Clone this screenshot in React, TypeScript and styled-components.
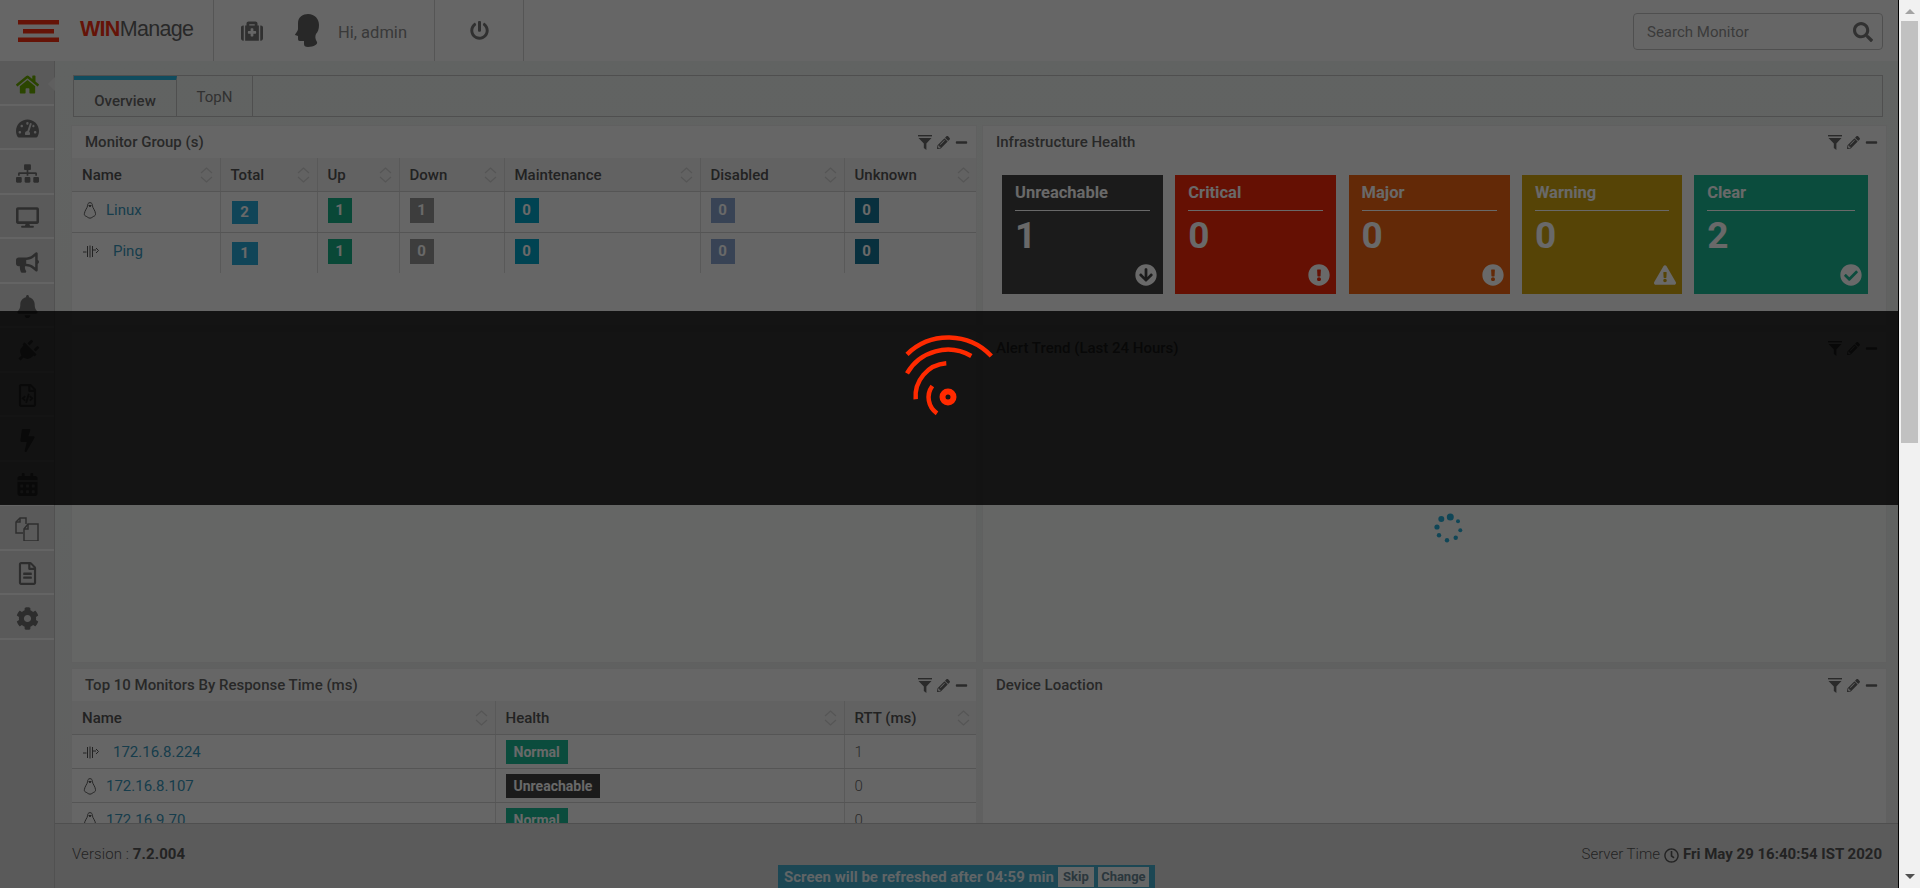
import React from "react";
import styled, { createGlobalStyle } from "styled-components";
import {
  FaHome,
  FaTachometerAlt,
  FaSitemap,
  FaDesktop,
  FaBullhorn,
  FaBell,
  FaPlug,
  FaRegFileCode,
  FaBolt,
  FaCalendarAlt,
  FaRegFileAlt,
  FaCog,
  FaMedkit,
  FaPowerOff,
  FaSearch,
  FaPencilAlt,
  FaMinus,
  FaArrowCircleDown,
  FaExclamationCircle,
  FaExclamationTriangle,
  FaCheckCircle,
  FaRegClock,
} from "react-icons/fa";

const GlobalStyle = createGlobalStyle`
  html, body {
    margin: 0;
    padding: 0;
    height: 100%;
    overflow: hidden;
    background: #f1f1f1;
    font-family: Roboto, "Liberation Sans", sans-serif;
  }
  * { box-sizing: border-box; }
`;

const CopyIcon = () => (
  <svg width="24" height="24" viewBox="0 0 24 24" fill="none" stroke="currentColor" strokeWidth="1.5">
    <path d="M8 16H1V5l4-4h6v6" />
    <path d="M1 5h4V1" />
    <path d="M9 12l4-5h10v17H9z" />
    <path d="M9 12h4V7" />
  </svg>
);

const HeadIcon = () => (
  <svg width="25" height="33" viewBox="0 0 25 33" fill="currentColor">
    <path d="M13 0c7 0 11 5 11 11 0 4-1 7-3 9-1 2-1 5 1 8 1 2-3 5-9 5-3 0-4-1-4-3v-3H5c-2 0-2-1-2-3v-2l-3-1c0-1 3-4 3-6V9C3 3 8 0 13 0z" />
  </svg>
);

const MenuIcon = () => (
  <svg width="41" height="22" viewBox="0 0 41 22" fill="currentColor">
    <rect x="0" y="0" width="41" height="4.5" />
    <rect x="5" y="9" width="31" height="4.5" />
    <rect x="0" y="17.5" width="41" height="4.5" />
  </svg>
);

const FunnelIcon = () => (
  <svg width="14" height="15" viewBox="0 0 14 15" fill="currentColor">
    <rect x="0" y="0" width="14" height="1.4" />
    <path d="M0.5 3h13L8.4 8.6V15L5.8 13V8.6z" />
  </svg>
);

const PenguinIcon = () => (
  <svg width="14" height="17" viewBox="0 0 13 16" fill="none" stroke="currentColor" strokeWidth="0.9">
    <path d="M6.500 0.600c1.700 0 2.300 1.300 2.300 3 0 1.600 2.700 4.400 2.900 7.400.1 1.300-.4 2-1.600 2.400-1 .4-2 1.800-3.600 1.800s-2.700-1.400-3.700-1.800C1.600 13 1 12.300 1.200 11 1.500 8 4.200 5.200 4.200 3.600c0-1.700.6-3 2.300-3z" />
    <path d="M5.400 3.300h2.200L6.500 4.600z" fill="currentColor" />
  </svg>
);

const PingIcon = () => (
  <svg width="16" height="13" viewBox="0 0 16 13" fill="none" stroke="currentColor" strokeWidth="1">
    <path d="M0 7h3.500M4.500 1v11M7 0.500v12M9.500 1v11M9.500 5h3.500M13 3l2.500 2.500L13 8" />
  </svg>
);

const SortIcon = () => (
  <svg width="13" height="16" viewBox="0 0 13 16" fill="none" stroke="currentColor" strokeWidth="1.1">
    <path d="M1 6l5.500-5 5.500 5M1 10l5.500 5 5.500-5" />
  </svg>
);

const WaveLogo = () => (
  <svg width="130" height="100" viewBox="-64 -70 130 100" fill="none" stroke="#ff2a00" strokeWidth="4.5">
    <path d="M-41 -42.700A59.300 59.300 0 0 1 43.300 -41" />
    <path d="M-41 -23.700A47 47 0 0 1 23.300 -41" />
    <path d="M-32.300 2.300A33 33 0 0 1 -1.700 -33.700" />
    <path d="M-15.700 -11A19.300 19.300 0 0 0 -11 16.300" />
    <circle cx="0" cy="0" r="5.500" strokeWidth="6" />
  </svg>
);

const SpinnerIcon = () => (
  <svg width="32" height="32" viewBox="0 0 32 32" fill="#259cc0">
    <circle cx="18.300" cy="5" r="3.500" />
    <circle cx="9.300" cy="7" r="3" />
    <circle cx="5" cy="15" r="2.600" />
    <circle cx="7" cy="23.300" r="2.200" />
    <circle cx="15" cy="28.300" r="2.200" />
    <circle cx="23.700" cy="25.700" r="2.200" />
    <circle cx="28.300" cy="18.300" r="2" />
    <circle cx="26" cy="9.300" r="2" />
  </svg>
);

const TiltedPlug = styled(FaPlug)`
  transform: rotate(45deg);
`;

const navItems = [
  { icon: <FaHome />, active: true },
  { icon: <FaTachometerAlt /> },
  { icon: <FaSitemap /> },
  { icon: <FaDesktop /> },
  { icon: <FaBullhorn /> },
  { icon: <FaBell /> },
  { icon: <TiltedPlug /> },
  { icon: <FaRegFileCode /> },
  { icon: <FaBolt /> },
  { icon: <FaCalendarAlt /> },
  { icon: <CopyIcon /> },
  { icon: <FaRegFileAlt /> },
  { icon: <FaCog /> },
];

const healthCards = [
  { title: "Unreachable", count: 1, color: "#3c3c3c", width: 161, icon: <FaArrowCircleDown /> },
  { title: "Critical", count: 0, color: "#e02407", width: 161, icon: <FaExclamationCircle /> },
  { title: "Major", count: 0, color: "#dc5b10", width: 161, icon: <FaExclamationCircle /> },
  { title: "Warning", count: 0, color: "#be970f", width: 160, icon: <FaExclamationTriangle /> },
  { title: "Clear", count: 2, color: "#1aa888", width: 174, icon: <FaCheckCircle /> },
];

const groupColumns = [
  { name: "Name", width: 148 },
  { name: "Total", width: 97 },
  { name: "Up", width: 82 },
  { name: "Down", width: 105 },
  { name: "Maintenance", width: 196 },
  { name: "Disabled", width: 144 },
  { name: "Unknown", width: 133 },
];

const groupRows = [
  { name: "Linux", icon: <PenguinIcon />, gap: 9, values: [2, 1, 1, 0, 0, 0] },
  { name: "Ping", icon: <PingIcon />, gap: 14, values: [1, 1, 0, 0, 0, 0] },
];

const badgeColors = ["#2599c4", "#14a07a", "#888888", "#0096b5", "#7d96bc", "#136c8a"];

const topColumns = [
  { name: "Name", width: 423 },
  { name: "Health", width: 349 },
  { name: "RTT (ms)", width: 133 },
];

const topRows = [
  { ip: "172.16.8.224", ping: true, health: "Normal", rtt: 1 },
  { ip: "172.16.8.107", ping: false, health: "Unreachable", rtt: 0 },
  { ip: "172.16.9.70", ping: false, health: "Normal", rtt: 0 },
];

const PanelHead = ({ title }: { title: string }) => (
  <PanelHeader>
    <PanelTitle>{title}</PanelTitle>
    <PanelTools>
      <FunnelIcon />
      <FaPencilAlt />
      <FaMinus />
    </PanelTools>
  </PanelHeader>
);

const TableHead = ({ columns }: { columns: { name: string; width: number }[] }) => (
  <>
    <colgroup>
      {columns.map((c) => (
        <col key={c.name} width={c.width} />
      ))}
    </colgroup>
    <thead>
      <tr>
        {columns.map((c) => (
          <HeadCell key={c.name}>
            <HeadInner>
              {c.name}
              <SortIcon />
            </HeadInner>
          </HeadCell>
        ))}
      </tr>
    </thead>
  </>
);

const App: React.FC = () => {
  return (
    <Shell>
      <GlobalStyle />
      <Page>
        <Header>
          <BrandBlock>
            <MenuButton>
              <MenuIcon />
            </MenuButton>
            <Logo>
              <LogoAccent>WIN</LogoAccent>Manage
            </Logo>
          </BrandBlock>
          <UserBlock>
            <MedkitButton>
              <FaMedkit />
            </MedkitButton>
            <UserHead>
              <HeadIcon />
            </UserHead>
            <UserName>Hi, admin</UserName>
          </UserBlock>
          <PowerBlock>
            <FaPowerOff />
          </PowerBlock>
          <SearchBox>
            <SearchText>Search Monitor</SearchText>
            <FaSearch />
          </SearchBox>
        </Header>
        <Body>
          <Sidebar>
            {navItems.map((item, i) => (
              <NavItem key={i} $active={item.active}>
                {item.icon}
              </NavItem>
            ))}
          </Sidebar>
          <Main>
            <Content>
              <Tabs>
                <Tab $active>Overview</Tab>
                <Tab>TopN</Tab>
              </Tabs>
              <PanelGrid>
                <Panel>
                  <PanelHead title="Monitor Group (s)" />
                  <DataTable>
                    <TableHead columns={groupColumns} />
                    <tbody>
                      {groupRows.map((row) => (
                        <GroupRow key={row.name}>
                          <Cell>
                            <NameWrap $gap={row.gap}>
                              <RowIcon>{row.icon}</RowIcon>
                              <RowLink>{row.name}</RowLink>
                            </NameWrap>
                          </Cell>
                          {row.values.map((v, i) => (
                            <Cell key={i}>
                              <CountBadge $color={badgeColors[i]} $wide={i === 0}>
                                {v}
                              </CountBadge>
                            </Cell>
                          ))}
                        </GroupRow>
                      ))}
                    </tbody>
                  </DataTable>
                </Panel>
                <Panel>
                  <PanelHead title="Infrastructure Health" />
                  <CardRow>
                    {healthCards.map((card) => (
                      <HealthCard key={card.title} $color={card.color} $width={card.width}>
                        <CardTitle>{card.title}</CardTitle>
                        <CardCount>{card.count}</CardCount>
                        <CardIcon>{card.icon}</CardIcon>
                      </HealthCard>
                    ))}
                  </CardRow>
                </Panel>
                <Panel $tint />
                <Panel $tint>
                  <PanelHead title="Alert Trend (Last 24 Hours)" />
                  <SpinnerWrap>
                    <SpinnerIcon />
                  </SpinnerWrap>
                </Panel>
                <Panel>
                  <PanelHead title="Top 10 Monitors By Response Time (ms)" />
                  <DataTable>
                    <TableHead columns={topColumns} />
                    <tbody>
                      {topRows.map((row) => (
                        <TopRow key={row.ip}>
                          <Cell>
                            <NameWrap $gap={row.ping ? 14 : 9}>
                              <RowIcon>{row.ping ? <PingIcon /> : <PenguinIcon />}</RowIcon>
                              <RowLink>{row.ip}</RowLink>
                            </NameWrap>
                          </Cell>
                          <Cell>
                            <HealthBadge $down={row.health === "Unreachable"}>{row.health}</HealthBadge>
                          </Cell>
                          <Cell>{row.rtt}</Cell>
                        </TopRow>
                      ))}
                    </tbody>
                  </DataTable>
                </Panel>
                <Panel>
                  <PanelHead title="Device Loaction" />
                </Panel>
              </PanelGrid>
            </Content>
            <Footer>
              <Version>
                Version : <strong>7.2.004</strong>
              </Version>
              <RefreshBar>
                Screen will be refreshed after 04:59 min
                <RefreshButton $width={36}>Skip</RefreshButton>
                <RefreshButton $width={51}>Change</RefreshButton>
              </RefreshBar>
              <ServerTime>
                Server Time <FaRegClock /> <strong>Fri May 29 16:40:54 IST 2020</strong>
              </ServerTime>
            </Footer>
          </Main>
        </Body>
        <Overlay>
          <LoaderBand>
            <WaveLogo />
          </LoaderBand>
        </Overlay>
      </Page>
      <Scrollbar>
        <ArrowUp />
        <Thumb />
        <ArrowDown />
      </Scrollbar>
    </Shell>
  );
};
export default App;

const Shell = styled.div`
  width: 1920px;
  height: 888px;
  display: flex;
  overflow: hidden;
`;

const Page = styled.div`
  position: relative;
  width: 1899px;
  height: 888px;
  display: flex;
  flex-direction: column;
  border-right: 1px solid #000;
  overflow: hidden;
  color: #5e5e5e;
  font-size: 15px;
`;

const Overlay = styled.div`
  position: absolute;
  inset: 0;
  background: rgba(0, 0, 0, 0.55);
`;

const LoaderBand = styled.div`
  position: absolute;
  left: 0;
  right: 0;
  top: 311px;
  height: 194px;
  padding-top: 16px;
  display: flex;
  justify-content: center;
  background: rgba(0, 0, 0, 0.8);
`;

const Scrollbar = styled.div`
  width: 21px;
  height: 888px;
  background: #f1f1f1;
  display: flex;
  flex-direction: column;
  align-items: center;
  padding-top: 9px;
`;

const ArrowUp = styled.div`
  width: 0;
  height: 0;
  border-left: 5px solid transparent;
  border-right: 5px solid transparent;
  border-bottom: 5px solid #a3a3a3;
  margin-bottom: 7px;
`;

const Thumb = styled.div`
  width: 17px;
  height: 422px;
  background: #c1c1c1;
`;

const ArrowDown = styled.div`
  width: 0;
  height: 0;
  margin-top: auto;
  margin-bottom: 9px;
  border-left: 5px solid transparent;
  border-right: 5px solid transparent;
  border-top: 5px solid #505050;
`;

const Header = styled.header`
  height: 61px;
  flex: none;
  display: flex;
  align-items: stretch;
  background: #e3e3e3;
  box-shadow: 0 1px 3px rgba(0, 0, 0, 0.25);
`;

const BrandBlock = styled.div`
  width: 214px;
  display: flex;
  align-items: center;
  padding-left: 18px;
  border-right: 1px solid #bdbdbd;
`;

const MenuButton = styled.div`
  display: flex;
  color: #e02c10;
  margin-right: 21px;
`;

const Logo = styled.div`
  font-family: "Liberation Sans", sans-serif;
  font-size: 21.5px;
  letter-spacing: -0.7px;
  color: #5a5a5a;
  margin-top: -3px;
`;

const LogoAccent = styled.span`
  font-weight: 700;
  color: #e02c10;
`;

const UserBlock = styled.div`
  width: 221px;
  display: flex;
  align-items: center;
  border-right: 1px solid #bdbdbd;
  padding-left: 27px;
`;

const MedkitButton = styled.div`
  display: flex;
  font-size: 22px;
  color: #6b6b6b;
  margin-right: 32px;
`;

const UserHead = styled.div`
  display: flex;
  color: #5a5a5a;
  margin-right: 18px;
`;

const UserName = styled.div`
  font-size: 16.5px;
  color: #7e7e7e;
  font-weight: 400;
  margin-top: 3px;
`;

const PowerBlock = styled.div`
  width: 89px;
  display: flex;
  align-items: center;
  justify-content: center;
  border-right: 1px solid #bdbdbd;
  font-size: 19px;
  color: #6b6b6b;
`;

const SearchBox = styled.div`
  width: 250px;
  height: 37px;
  margin: 13px 15px 0 auto;
  padding: 0 9px 0 13px;
  display: flex;
  align-items: center;
  justify-content: space-between;
  border: 1px solid #b0b0b0;
  border-radius: 4px;
  font-size: 20px;
  color: #6e6e6e;
`;

const SearchText = styled.span`
  font-size: 15px;
  color: #838383;
`;

const Body = styled.div`
  flex: 1;
  min-height: 0;
  display: flex;
`;

const Sidebar = styled.nav`
  width: 55px;
  flex: none;
  background: #c8c8c8;
  border-right: 1px solid #b4b4b4;
`;

const NavItem = styled.div<{ $active?: boolean }>`
  position: relative;
  height: 44.5px;
  padding-top: 4px;
  display: flex;
  align-items: center;
  justify-content: center;
  border-bottom: 2px solid #dedede;
  font-size: 23px;
  color: ${(p) => (p.$active ? "#5f9a00" : "#656565")};
  ${(p) =>
    p.$active &&
    `&::after {
      content: "";
      position: absolute;
      right: -1px;
      top: 16px;
      border-top: 7px solid transparent;
      border-bottom: 7px solid transparent;
      border-right: 7px solid #d3d3d3;
    }`}
`;

const Main = styled.main`
  flex: 1;
  min-width: 0;
  display: flex;
  flex-direction: column;
  background: #d3d3d3;
`;

const Content = styled.div`
  flex: 1;
  min-height: 0;
  overflow: hidden;
  padding: 14px 11px 0 16px;
  background: linear-gradient(#d8dbd9, #d6d9d7 60%, #d6d6d6);
`;

const Tabs = styled.div`
  height: 42px;
  margin: 0 4px 8px 2px;
  display: flex;
  border: 1px solid #b0b0b0;
`;

const Tab = styled.div<{ $active?: boolean }>`
  display: flex;
  justify-content: center;
  border-right: 1px solid #b0b0b0;
  font-size: 15px;
  width: ${(p) => (p.$active ? "103px" : "76px")};
  padding-top: 12px;
  border-top: ${(p) => (p.$active ? "4px solid #24a8d0" : "none")};
  font-weight: ${(p) => (p.$active ? 500 : 400)};
  color: ${(p) => (p.$active ? "#5e5e5e" : "#6e6e6e")};
`;

const PanelGrid = styled.div`
  display: grid;
  grid-template-columns: 906px 905px;
  grid-template-rows: 201px 332px 200px;
  column-gap: 5px;
  row-gap: 5px;
`;

const Panel = styled.section<{ $tint?: boolean }>`
  background: ${(p) => (p.$tint ? "#dfe2e0" : "#e3e3e3")};
  border: 1px solid #d6d6d6;
  min-width: 0;
  overflow: hidden;
`;

const PanelHeader = styled.div`
  height: 32px;
  padding: 0 8px 0 13px;
  display: flex;
  align-items: center;
  justify-content: space-between;
`;

const PanelTitle = styled.div`
  font-size: 15px;
  font-weight: 500;
  color: #5a5a5a;
`;

const PanelTools = styled.div`
  display: flex;
  align-items: center;
  gap: 5px;
  font-size: 13px;
  color: #5e5e5e;
`;

const DataTable = styled.table`
  width: 905px;
  table-layout: fixed;
  border-collapse: collapse;
  font-size: 15px;
`;

const HeadCell = styled.th`
  height: 33px;
  padding: 2px 7px 0 10px;
  background: #d9d9d9;
  text-align: left;
  font-size: 15px;
  font-weight: 500;
  color: #4c4c4c;
  border-right: 1px solid #c6c6c6;
  border-bottom: 1px solid #bdbdbd;
  &:last-child {
    border-right: none;
  }
`;

const HeadInner = styled.div`
  display: flex;
  align-items: center;
  justify-content: space-between;
  svg {
    color: #bcbcbc;
    flex: none;
  }
`;

const Cell = styled.td`
  padding: 0 10px;
  font-weight: 300;
  color: #5e5e5e;
  border-right: 1px solid #c6c6c6;
  border-bottom: 1px solid #bdbdbd;
  &:last-child {
    border-right: none;
  }
`;

const GroupRow = styled.tr`
  height: 41px;
  td {
    vertical-align: top;
    padding-top: 6px;
  }
  &:last-child td {
    border-bottom: none;
  }
`;

const TopRow = styled.tr`
  height: 34px;
  td {
    padding-top: 2px;
  }
`;

const NameWrap = styled.div<{ $gap: number }>`
  display: flex;
  align-items: center;
  height: 25px;
  gap: ${(p) => p.$gap}px;
  padding-left: 1px;
`;

const RowIcon = styled.span`
  display: flex;
  color: #4e4e4e;
`;

const RowLink = styled.span`
  color: #3488a8;
  font-size: 15px;
  font-weight: 400;
`;

const CountBadge = styled.span<{ $color: string; $wide?: boolean }>`
  display: flex;
  align-items: center;
  justify-content: center;
  height: ${(p) => (p.$wide ? "23px" : "25px")};
  width: ${(p) => (p.$wide ? "26px" : "24px")};
  margin: ${(p) => (p.$wide ? "3px 0 0 1px" : "0")};
  background: ${(p) => p.$color};
  color: #e8e8e8;
  font-size: 15px;
  font-weight: 700;
`;

const HealthBadge = styled.span<{ $down?: boolean }>`
  display: inline-block;
  padding: 0 8px;
  height: 24px;
  line-height: 24px;
  background: ${(p) => (p.$down ? "#3c3c3c" : "#1aa888")};
  color: #e8e8e8;
  font-size: 14px;
  font-weight: 700;
`;

const CardRow = styled.div`
  display: flex;
  gap: 12.3px;
  padding: 17px 0 0 19px;
`;

const HealthCard = styled.div<{ $color: string; $width: number }>`
  position: relative;
  width: ${(p) => p.$width}px;
  height: 119px;
  padding: 0 13px;
  background: ${(p) => p.$color};
  color: #e8e8e8;
`;

const CardTitle = styled.div`
  height: 36px;
  padding-top: 8px;
  font-size: 16.5px;
  font-weight: 700;
  border-bottom: 1px solid #e8e8e8;
`;

const CardCount = styled.div`
  font-size: 37px;
  line-height: 44px;
  margin-top: 3px;
  font-weight: 700;
`;

const CardIcon = styled.div`
  position: absolute;
  right: 6px;
  bottom: 8px;
  display: flex;
  font-size: 22px;
`;

const SpinnerWrap = styled.div`
  display: flex;
  justify-content: center;
  padding: 148px 0 0 26px;
`;

const Footer = styled.footer`
  height: 65px;
  flex: none;
  display: flex;
  padding-left: 17px;
  padding-right: 16px;
  background: #cacaca;
  border-top: 1px solid #b0b0b0;
  font-size: 15px;
  font-weight: 300;
  color: #4e4e4e;
  strong {
    font-weight: 700;
  }
`;

const Version = styled.div`
  width: 706px;
  padding-top: 21px;
  letter-spacing: 0.1px;
`;

const RefreshBar = styled.div`
  align-self: flex-end;
  height: 23px;
  width: 377px;
  padding: 2px 3px 2px 6px;
  display: flex;
  align-items: center;
  gap: 4px;
  background: #3f9dbb;
  color: #d6dfe2;
  font-size: 15px;
  font-weight: 700;
  white-space: nowrap;
`;

const RefreshButton = styled.div<{ $width: number }>`
  width: ${(p) => p.$width}px;
  height: 20px;
  display: flex;
  align-items: center;
  justify-content: center;
  background: #dfe3e3;
  color: #5f7a88;
  font-size: 13px;
  font-weight: 700;
`;

const ServerTime = styled.div`
  margin-left: auto;
  padding-top: 21px;
  display: flex;
  gap: 4px;
  svg {
    margin-top: 3px;
  }
`;
